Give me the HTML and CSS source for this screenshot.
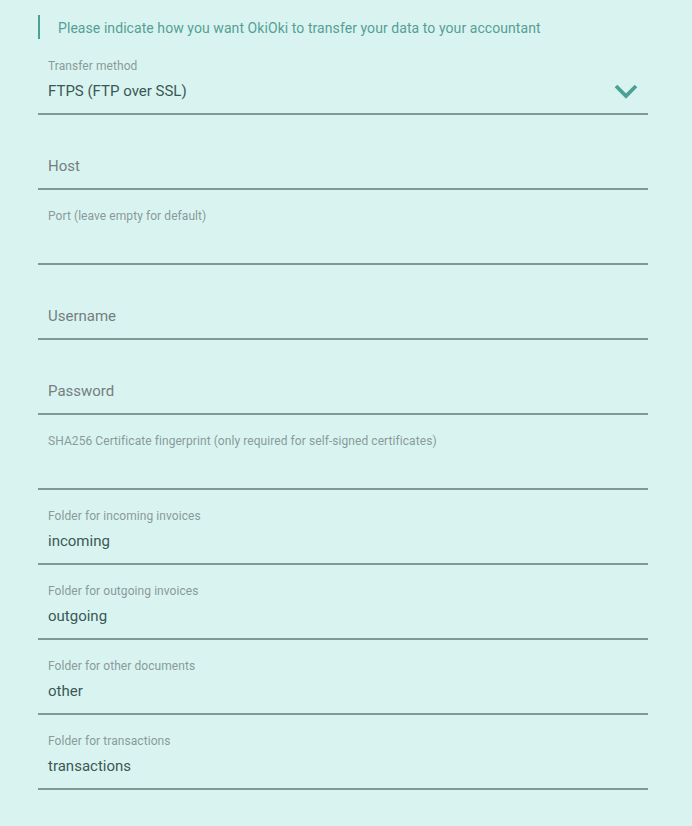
FILE: index.html
```html
<!DOCTYPE html>
<html lang="en">
<head>
    <meta charset="UTF-8">
    <meta name="viewport" content="width=device-width, initial-scale=1.0">
    <title>Accountant transfer</title>
    <link rel="stylesheet" href="styles.css">
</head>
<body>
    <div class="container">
        <p class="intro">Please indicate how you want OkiOki to transfer your data to your accountant</p>

        <div class="field select">
            <span class="label">Transfer method</span>
            <span class="value">FTPS (FTP over SSL)</span>
            <svg class="chevron" width="24" height="16" viewBox="0 0 24 16">
                <polyline points="2,2 12,12 22,2" fill="none" stroke="#4aa295" stroke-width="3.8"/>
            </svg>
        </div>

        <div class="field">
            <span class="label"></span>
            <span class="placeholder">Host</span>
        </div>

        <div class="field">
            <span class="label">Port (leave empty for default)</span>
            <span class="value"></span>
        </div>

        <div class="field">
            <span class="label"></span>
            <span class="placeholder">Username</span>
        </div>

        <div class="field">
            <span class="label"></span>
            <span class="placeholder">Password</span>
        </div>

        <div class="field">
            <span class="label">SHA256 Certificate fingerprint (only required for self-signed certificates)</span>
            <span class="value"></span>
        </div>

        <div class="field">
            <span class="label">Folder for incoming invoices</span>
            <span class="value">incoming</span>
        </div>

        <div class="field">
            <span class="label">Folder for outgoing invoices</span>
            <span class="value">outgoing</span>
        </div>

        <div class="field">
            <span class="label">Folder for other documents</span>
            <span class="value">other</span>
        </div>

        <div class="field">
            <span class="label">Folder for transactions</span>
            <span class="value">transactions</span>
        </div>
    </div>
</body>
</html>
```

FILE: styles.css
```css
body {
    font-family: Roboto, 'Liberation Sans', sans-serif;
    margin: 0;
    padding: 0;
    background-color: #d9f4f0;
    color: #3b5856;
}

.container {
    width: 610px;
    margin-left: 38px;
    padding-top: 15px;
}

.intro {
    margin: 0;
    padding: 2px 0 0 18px;
    border-left: 2px solid #4aa295;
    font-size: 14px;
    line-height: 22px;
    letter-spacing: 0.07px;
    color: #559f96;
}

.field {
    position: relative;
    display: flex;
    flex-direction: column;
    height: 73px;
    padding: 0 10px;
    border-bottom: 2px solid #7f9a95;
}

.intro + .field {
    margin-top: 1px;
}

.label {
    display: block;
    height: 14px;
    margin-top: 19px;
    font-size: 12px;
    line-height: 14px;
    letter-spacing: 0.07px;
    color: #8a9a9a;
}

.value,
.placeholder {
    display: block;
    height: 20px;
    margin-top: 8px;
    font-size: 15px;
    line-height: 20px;
    color: #3b5856;
}

.placeholder {
    color: #757d80;
}

.chevron {
    position: absolute;
    right: 10px;
    top: 44px;
}
```
